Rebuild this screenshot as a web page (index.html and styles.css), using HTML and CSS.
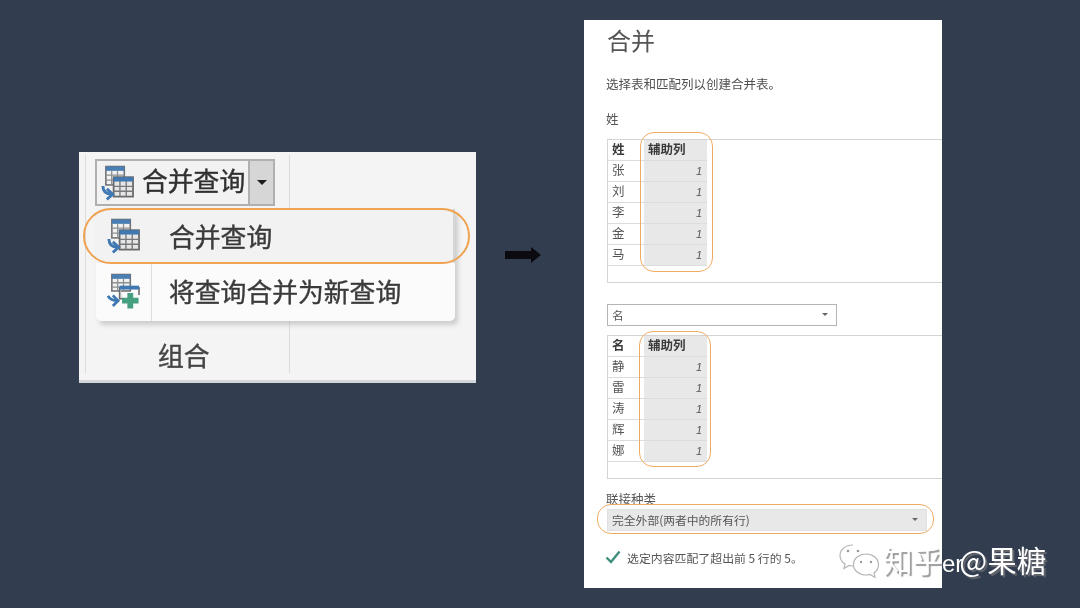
FILE: index.html
```html
<!DOCTYPE html>
<html lang="zh-CN">
<head>
<meta charset="utf-8">
<title>合并查询</title>
<link rel="stylesheet" href="styles.css">
</head>
<body>
<svg class="defs" width="0" height="0" aria-hidden="true">
  <symbol id="merge" viewBox="0 0 34 36">
    <rect x="5" y="1" width="19" height="19" fill="#f2f2f2" stroke="#6f7174" stroke-width="1.6"/>
    <rect x="5" y="1" width="19" height="4.500" fill="#4a7fb5"/>
    <path d="M5 10h19M5 15h19M11 5v15M17 5v15" stroke="#8e9092" stroke-width="1.300" fill="none"/>
    <rect x="13" y="12" width="20" height="20" fill="#e6e6e6" stroke="#66686b" stroke-width="1.800"/>
    <rect x="13" y="12" width="20" height="4.500" fill="#3f78b2"/>
    <path d="M13 21.500h20M13 26.500h20M19.500 16v16M26 16v16" stroke="#77797b" stroke-width="1.400" fill="none"/>
    <path d="M2 21c0 6 3 8.500 9 8.500" stroke="#3f78b2" stroke-width="3" fill="none"/>
    <path d="M6 24l6 5.500-6 5.500" stroke="#3f78b2" stroke-width="3" fill="none"/>
  </symbol>
  <symbol id="merge-new" viewBox="0 0 34 36">
    <rect x="5" y="1" width="19" height="17" fill="#f2f2f2" stroke="#6f7174" stroke-width="1.600"/>
    <rect x="5" y="1" width="19" height="4.500" fill="#4a7fb5"/>
    <path d="M5 9.500h19M5 14h19M11 5v13M17 5v13" stroke="#8e9092" stroke-width="1.300" fill="none"/>
    <path d="M13 14v12h4M33 14v8" stroke="#66686b" stroke-width="1.600" fill="#e6e6e6"/>
    <rect x="13" y="12.500" width="20" height="4" fill="#3f78b2"/>
    <path d="M1 23c2 4 5 5 10 5" stroke="#3f78b2" stroke-width="2.800" fill="none"/>
    <path d="M6 22.500l5.500 5.500-5.500 5.500" stroke="#3f78b2" stroke-width="2.800" fill="none"/>
    <path d="M21 20h6v5h5.500v6H27v5h-6v-5h-5.500v-6H21z" fill="#46a080"/>
  </symbol>
</svg>

<main class="stage">
  <section class="ribbon">
    <div class="ribbon-group">
      <div class="split-button">
        <svg class="icon icon-button"><use href="#merge"/></svg>
        <span class="split-label">合并查询</span>
        <span class="split-arrow"><i class="caret"></i></span>
      </div>
      <div class="menu">
        <div class="menu-item is-active">
          <svg class="icon icon-menu"><use href="#merge"/></svg>
          <span>合并查询</span>
        </div>
        <div class="menu-item">
          <svg class="icon icon-menu"><use href="#merge-new"/></svg>
          <span>将查询合并为新查询</span>
        </div>
      </div>
      <div class="group-name">组合</div>
    </div>
    <div class="pill pill-menu"></div>
  </section>

  <svg class="big-arrow" viewBox="0 0 36 16"><path d="M0 4h26V0l10 8-10 8v-4H0z" fill="#0a0a10"/></svg>

  <section class="dialog">
    <h1 class="dialog-title">合并</h1>
    <p class="dialog-desc">选择表和匹配列以创建合并表。</p>
    <div class="label label-first">姓</div>
    <div class="preview">
      <div class="cell head">姓</div><div class="cell head shade">辅助列</div>
      <div class="cell">张</div><div class="cell num shade">1</div>
      <div class="cell">刘</div><div class="cell num shade">1</div>
      <div class="cell">李</div><div class="cell num shade">1</div>
      <div class="cell">金</div><div class="cell num shade">1</div>
      <div class="cell">马</div><div class="cell num shade">1</div>
    </div>
    <div class="select select-name"><span>名</span><i class="caret caret-small"></i></div>
    <div class="preview preview-second">
      <div class="cell head">名</div><div class="cell head shade">辅助列</div>
      <div class="cell">静</div><div class="cell num shade">1</div>
      <div class="cell">雷</div><div class="cell num shade">1</div>
      <div class="cell">涛</div><div class="cell num shade">1</div>
      <div class="cell">辉</div><div class="cell num shade">1</div>
      <div class="cell">娜</div><div class="cell num shade">1</div>
    </div>
    <div class="label label-join">联接种类</div>
    <div class="select select-join"><span>完全外部(两者中的所有行)</span><i class="caret caret-small"></i></div>
    <div class="status">
      <svg class="check" viewBox="0 0 16 14"><path d="M1.500 7.500l4.500 4.500 8.500-10.500" fill="none" stroke="#3f8f7c" stroke-width="2.400"/></svg>
      <span>选定内容匹配了超出前 5 行的 5。</span>
    </div>
    <div class="pill pill-first"></div>
    <div class="pill pill-second"></div>
    <div class="pill pill-join"></div>
  </section>

  <div class="watermark">
    <svg class="wechat" viewBox="0 0 42 34">
      <path d="M15 1C7.500 1 2 5.500 2 11.500c0 3.500 2 6.500 5 8.500l-1 4.500 5-3c1.500.4 2.500.5 4 .5" fill="#fff" stroke="#b5b5b5" stroke-width="1.200"/>
      <path d="M28 10c-7 0-12.500 4.500-12.500 10.500S21 31 28 31c1.500 0 3-.2 4-.6l5 3-1-4.500c3-2 4.500-5 4.500-8.400C40.500 14.500 35 10 28 10z" fill="#fff" stroke="#b5b5b5" stroke-width="1.200"/>
      <circle cx="10" cy="7" r="1.300" fill="#999"/><circle cx="20" cy="7" r="1.300" fill="#999"/>
      <circle cx="23" cy="18" r="1.200" fill="#999"/><circle cx="33" cy="18" r="1.200" fill="#999"/>
    </svg>
    <span class="wm-text">知乎<span class="wm-er">er</span>@果糖</span>
  </div>
</main>
</body>
</html>
```
FILE: styles.css
```css
* { box-sizing: border-box; }
html, body { margin: 0; padding: 0; }
body {
  width: 1080px;
  height: 608px;
  overflow: hidden;
  background: #323d50;
  font-family: "Noto Sans CJK SC", "Liberation Sans", sans-serif;
}
.defs { position: absolute; }
.stage { position: relative; width: 1080px; height: 608px; }
.icon { display: block; flex: none; }

/* free-canvas slide pieces */
.ribbon {
  position: absolute;
  left: 79px; top: 152px;
  width: 397px; height: 231px;
  background: #f4f4f4;
  border-bottom: 3px solid #d3d7db;
  filter: blur(0.7px);
  padding: 3px 0 0 6px;
}
.ribbon-group {
  width: 205px;
  height: 218px;
  border-left: 1px solid #dcdcdc;
  border-right: 1px solid #dcdcdc;
  padding-top: 4px;
}
.split-button {
  margin-left: 9px;
  width: 180px;
  height: 47px;
  display: flex;
  align-items: center;
  background: #f2f2f2;
  border: 2px solid #b0b0b0;
  color: #303030;
  font-size: 25.800px;
  line-height: 1;
  -webkit-text-stroke: 0.4px #303030;
}
.icon-button { width: 33px; height: 36px; margin-left: 4px; }
.split-label { margin: 0 0 5px 8px; width: 103px; white-space: nowrap; }
.split-arrow {
  margin-left: 3px;
  flex: 1;
  height: 100%;
  background: #d6d6d6;
  border-left: 2px solid #b0b0b0;
  display: flex;
  align-items: center;
  justify-content: center;
}
.caret {
  display: block;
  width: 0; height: 0;
  border-left: 5px solid transparent;
  border-right: 5px solid transparent;
  border-top: 5px solid #1c1c1c;
}
.caret-small {
  border-left-width: 3px;
  border-right-width: 3px;
  border-top: 3px solid #666;
}
.menu {
  margin: 3px 0 0 10px;
  width: 359px;
  height: 112px;
  background: #fbfbfb;
  border-radius: 5px;
  box-shadow: 3px 4px 4px rgba(170,170,170,0.5);
  color: #3a3a3a;
  font-size: 25.800px;
  line-height: 1;
  position: relative;
  background-image: linear-gradient(#dedede, #dedede);
  background-size: 1px 100%;
  background-position: 55px 0;
  background-repeat: no-repeat;
  -webkit-text-stroke: 0.4px #3a3a3a;
}
.menu-item {
  display: flex;
  align-items: center;
  height: 55px;
  white-space: nowrap;
}
.menu-item.is-active {
  height: 54px;
  background: #f2f2f2;
  border-right: 2px solid #d5d5d5;
}
.icon-menu { width: 33px; height: 36px; margin: 0 29px 0 11px; }
.group-name {
  margin: 16px 0 0 72px;
  color: #444;
  font-size: 25.800px;
  line-height: 36px;
  -webkit-text-stroke: 0.4px #444;
}
.pill {
  position: absolute;
  border: 2px solid #efa250;
  pointer-events: none;
}
.pill-menu {
  left: 4px; top: 56px;
  width: 387px; height: 56px;
  border-radius: 28px;
}
.big-arrow {
  position: absolute;
  left: 505px; top: 247px;
  width: 36px; height: 16px;
}
.dialog {
  position: absolute;
  left: 584px; top: 20px;
  width: 358px; height: 568px;
  background: #fff;
  color: #555;
  overflow: hidden;
  padding-left: 23px;
  filter: blur(0.5px);
}
.dialog-title {
  margin: 0;
  height: 42px;
  font-size: 24px;
  font-weight: 400;
  line-height: 40px;
  color: #555;
}
.dialog-desc {
  margin: 12px 0 0 -1px;
  font-size: 12.500px;
  line-height: 20px;
  color: #505050;
}
.label {
  font-size: 12.500px;
  line-height: 20px;
  color: #555;
  margin-left: -1px;
}
.label-first { margin-top: 15px; }
.label-join { margin-top: 10px; }
.preview {
  margin-top: 10px;
  width: 335px;
  height: 144px;
  border: 1px solid #d4d4d4;
  border-right: 0;
  display: grid;
  grid-template-columns: 36px 63px;
  grid-auto-rows: 21px;
  align-content: start;
  justify-content: start;
}
.preview-second { margin-top: 9px; }
.cell {
  border-bottom: 1px solid #dcdcdc;
  font-size: 12.500px;
  line-height: 18px;
  padding-left: 4px;
  color: #555;
}
.cell.head { font-weight: 700; color: #3a3a3a; }
.shade { background: #e8e8e8; }
.num {
  font-family: "Liberation Sans", sans-serif;
  font-style: italic;
  font-size: 11px;
  text-align: right;
  padding: 1px 5px 0 0;
}
.select {
  display: flex;
  align-items: center;
  justify-content: space-between;
  height: 22px;
  padding: 0 8px 2px 4px;
  font-size: 11.800px;
  color: #555;
  border: 1px solid #b4b4b4;
}
.select-name { margin-top: 21px; width: 230px; }
.select-join { width: 320px; background: #e8e8e8; border-color: #e0e0e0; }
.status {
  margin: 16px 0 0 -2px;
  display: flex;
  align-items: center;
  gap: 6px;
  height: 20px;
  font-size: 11.900px;
  color: #555;
}
.check { width: 16px; height: 14px; flex: none; }
.pill-first, .pill-second, .pill-join { border: 1.500px solid #f0ab63; }
.pill-first { left: 56px; top: 112px; width: 73px; height: 140px; border-radius: 14px; }
.pill-second { left: 55px; top: 311px; width: 72px; height: 136px; border-radius: 14px; }
.pill-join { left: 13px; top: 484px; width: 337px; height: 30px; border-radius: 14px; }
.watermark {
  position: absolute;
  left: 838px; top: 543px;
  display: flex;
  align-items: center;
  gap: 3px;
  height: 36px;
  filter: blur(0.3px);
}
.wechat { width: 42px; height: 34px; flex: none; }
.wm-text {
  color: #fff;
  font-size: 29.500px;
  line-height: 36px;
  white-space: nowrap;
  text-shadow: 2px 2px 1px rgba(120,120,120,0.75);
}
.wm-er {
  font-family: "Liberation Sans", sans-serif;
  font-size: 24px;
  margin: 0 -4px 0 0;
  text-shadow: none;
}
```
